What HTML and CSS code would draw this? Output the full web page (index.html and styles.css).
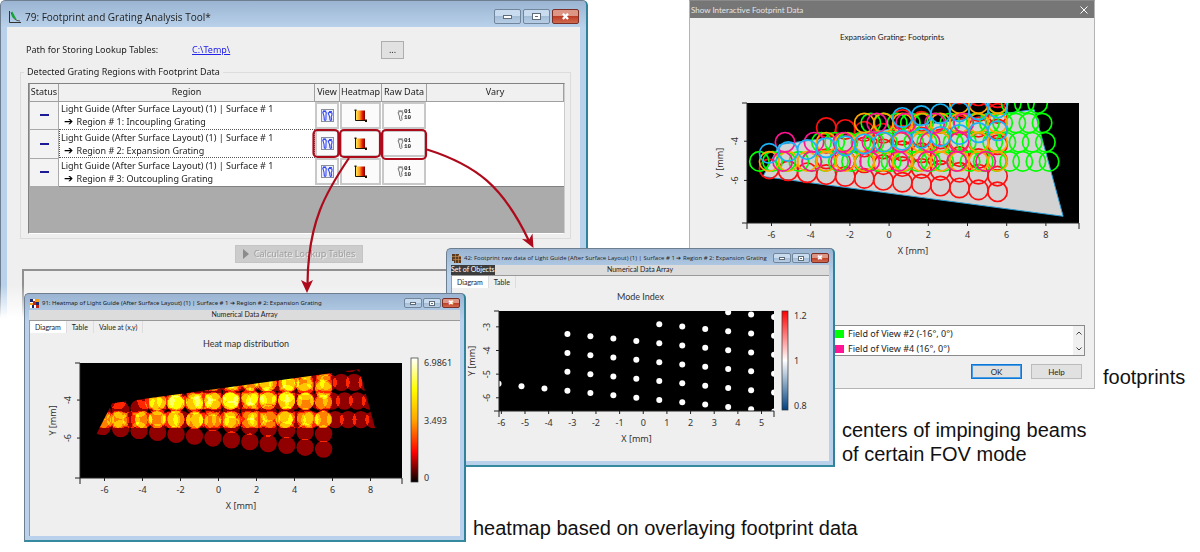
FILE: index.html
```html
<!DOCTYPE html>
<html lang="en">

<head>
    <meta charset="utf-8">
    <title>Footprint and Grating Analysis Tool</title>
    <link rel="stylesheet" href="styles.css">
</head>

<body>
    <!-- shared icons -->
    <svg class="sprite" aria-hidden="true">
        <defs>
            <symbol id="icon-view" viewBox="0 0 13 13">
                <rect x=".5" y=".5" width="12" height="12" fill="#e9edff" stroke="#8a8f9c" />
                <g fill="#fff" stroke="#3347ee" stroke-width="1.1">
                    <path d="M1.8 3.2Q3.4 1.4 5.2 3.4L5 6.5L4.9 10.8Q3.9 12.2 3.3 10.6L3 7Z" />
                    <path d="M7.2 4.2Q9 2.4 11 4.2Q11.2 6 10.2 7.8L10.6 10.8Q9.6 12 9 10.8L8.6 7.6Z" />
                </g>
                <path d="M2 2h3M8 2.6h3" stroke="#3347ee" />
            </symbol>
            <symbol id="icon-heat" viewBox="0 0 13 13">
                <rect x="2" y="1.500" width="9" height="9.500" fill="url(#heat-icon)" />
                <path d="M1.5 1v10.500H12" fill="none" stroke="#1d1300" />
                <path d="M.500 .500h2v1.500h-2zM11 10.500h2V13h-2z" fill="#1d1300" />
            </symbol>
            <symbol id="icon-raw" viewBox="0 0 7 13">
                <path d="M1 3.500Q3.500 1 6 3.500Q5.600 6 4.600 7.500L5 10.500Q3.800 13 2.800 10.500L2.300 7Z" fill="#f4f4f4" stroke="#777" />
                <path d="M1 2h5" stroke="#777" />
            </symbol>
            <linearGradient id="heat-icon">
                <stop offset="0" stop-color="#ffe85a" />
                <stop offset=".4" stop-color="#ff9a1a" />
                <stop offset=".7" stop-color="#e62000" />
                <stop offset="1" stop-color="#7a0000" />
            </linearGradient>
            <linearGradient id="bar-hot" x2="0" y2="1">
                <stop offset="0" stop-color="#fff" />
                <stop offset=".25" stop-color="#ff0" />
                <stop offset=".5" stop-color="#ffa500" />
                <stop offset=".76" stop-color="#f00" />
                <stop offset="1" stop-color="#000" />
            </linearGradient>
            <linearGradient id="bar-mode" x2="0" y2="1">
                <stop offset="0" stop-color="#f00" />
                <stop offset=".5" stop-color="#fff" />
                <stop offset="1" stop-color="#004080" />
            </linearGradient>
            <!-- number of overlapping footprints to colour -->
            <filter id="hot" x="0" y="0" width="1" height="1" color-interpolation-filters="sRGB">
                <feComponentTransfer>
                    <feFuncR type="discrete" tableValues="0 .57 1 1 1 1 1 1" />
                    <feFuncG type="discrete" tableValues="0 0 .15 .5 .78 1 1 1" />
                    <feFuncB type="discrete" tableValues="0 0 0 0 0 0 .4 .6" />
                </feComponentTransfer>
            </filter>
        </defs>
    </svg>

    <main class="desktop">
        <section class="window tool">
            <header class="titlebar">
                <svg class="app-icon" viewBox="0 0 14 14">
                    <path d="M1.500 1v11.500H13" fill="none" stroke="#333" />
                    <path d="M3 2Q5 11 12 11" fill="none" stroke="#555" />
                    <path d="M4 1l5 9-5-3z" fill="#18a53a" />
                </svg>
                <h1>79: Footprint and Grating Analysis Tool*</h1>
                <div class="controls">
                    <button type="button" aria-label="Minimize"><i class="min"></i></button>
                    <button type="button" aria-label="Maximize"><i class="max"></i></button>
                    <button type="button" class="close" aria-label="Close">✖</button>
                </div>
            </header>
            <div class="tool-body">
                <div class="path-row">
                    <span>Path for Storing Lookup Tables:</span>
                    <a href="#">C:\Temp\</a>
                    <button type="button" class="browse">...</button>
                </div>
                <fieldset>
                    <legend>Detected Grating Regions with Footprint Data</legend>
                    <div class="grid">
                        <table>
                            <colgroup>
                                <col class="c-status">
                                <col>
                                <col class="c-view">
                                <col class="c-heat">
                                <col class="c-raw">
                                <col class="c-vary">
                            </colgroup>
                            <thead>
                                <tr>
                                    <th>Status</th>
                                    <th>Region</th>
                                    <th>View</th>
                                    <th>Heatmap</th>
                                    <th>Raw Data</th>
                                    <th>Vary</th>
                                </tr>
                            </thead>
                            <tbody>
                                <tr>
                                    <td class="status"><i></i></td>
                                    <td class="region">Light Guide (After Surface Layout) (1) | Surface # 1<br><span><b>➔</b> Region # 1: Incoupling Grating</span></td>
                                    <td class="action"><button type="button" aria-label="View"><svg class="icon"><use href="#icon-view" /></svg></button></td>
                                    <td class="action"><button type="button" aria-label="Heatmap"><svg class="icon"><use href="#icon-heat" /></svg></button></td>
                                    <td class="action"><button type="button"><svg class="icon foot"><use href="#icon-raw" /></svg><span class="bits">01<br>10</span></button></td>
                                    <td></td>
                                </tr>
                                <tr class="current">
                                    <td class="status"><i></i></td>
                                    <td class="region">Light Guide (After Surface Layout) (1) | Surface # 1<br><span><b>➔</b> Region # 2: Expansion Grating</span></td>
                                    <td class="action"><button type="button" aria-label="View"><svg class="icon"><use href="#icon-view" /></svg></button></td>
                                    <td class="action"><button type="button" aria-label="Heatmap"><svg class="icon"><use href="#icon-heat" /></svg></button></td>
                                    <td class="action"><button type="button"><svg class="icon foot"><use href="#icon-raw" /></svg><span class="bits">01<br>10</span></button></td>
                                    <td></td>
                                </tr>
                                <tr>
                                    <td class="status"><i></i></td>
                                    <td class="region">Light Guide (After Surface Layout) (1) | Surface # 1<br><span><b>➔</b> Region # 3: Outcoupling Grating</span></td>
                                    <td class="action"><button type="button" aria-label="View"><svg class="icon"><use href="#icon-view" /></svg></button></td>
                                    <td class="action"><button type="button" aria-label="Heatmap"><svg class="icon"><use href="#icon-heat" /></svg></button></td>
                                    <td class="action"><button type="button"><svg class="icon foot"><use href="#icon-raw" /></svg><span class="bits">01<br>10</span></button></td>
                                    <td></td>
                                </tr>
                            </tbody>
                        </table>
                    </div>
                </fieldset>
                <button type="button" class="calculate" disabled>
                    <svg viewBox="0 0 6 10"><path d="M0 0l6 5-6 5z" fill="#8b8b8b" /></svg>Calculate Lookup Tables
                </button>
                <div class="log"></div>
            </div>
        </section>

        <section class="dialog">
            <header>
                <h2>Show Interactive Footprint Data</h2>
                <button type="button" aria-label="Close"><svg viewBox="0 0 8 8"><path d="M.5 .5l7 7M7.500 .5l-7 7" stroke="#fff" /></svg></button>
            </header>
            <h3>Expansion Grating: Footprints</h3>
            <svg class="chart" id="footprints" width="404" height="262"></svg>
            <div class="legend">
                <ul>
                    <li class="green">Field of View #2 (-16°, 0°)</li>
                    <li class="pink">Field of View #4 (16°, 0°)</li>
                </ul>
                <div class="scroll">
                    <button type="button" aria-label="Up"><svg viewBox="0 0 6 4"><path d="M.5 3.500L3 1l2.500 2.500" /></svg></button>
                    <button type="button" aria-label="Down"><svg viewBox="0 0 6 4"><path d="M.5 .5L3 3L5.500 .5" /></svg></button>
                </div>
            </div>
            <footer>
                <button type="button" class="primary">OK</button>
                <button type="button">Help</button>
            </footer>
        </section>

        <section class="window small raw">
            <header class="titlebar">
                <svg class="app-icon" viewBox="0 0 9 9">
                    <path d="M0 0h7v7H0zM2 2h7v7H2z" fill="#5b3a22" />
                    <path d="M0 2.500h9M1 5.500h8M3.500 0v9M6.500 1v8" stroke="#c08a50" stroke-width=".7" />
                </svg>
                <h2>42: Footprint raw data of Light Guide (After Surface Layout) (1) | Surface # 1 ➔ Region # 2: Expansion Grating</h2>
                <div class="controls">
                    <button type="button" aria-label="Minimize"><i class="min"></i></button>
                    <button type="button" aria-label="Maximize"><i class="max"></i></button>
                    <button type="button" class="close" aria-label="Close">✖</button>
                </div>
            </header>
            <div class="view-type"><b>Set of Objects</b><span>Numerical Data Array</span></div>
            <nav class="tabs">
                <button type="button" class="on">Diagram</button>
                <button type="button">Table</button>
            </nav>
            <svg class="chart" id="raw" width="376" height="173"></svg>
        </section>

        <section class="window small heat">
            <header class="titlebar">
                <svg class="app-icon" viewBox="0 0 9 9">
                    <path d="M0 0h9v9H0z" fill="#fff" />
                    <path d="M0 0h3v3H0zM6 3h3v3H6zM2 6h2v3H2z" fill="#1d2466" />
                    <path d="M3 2h3v4H3zM6 6h3v3H6z" fill="#c22617" />
                    <path d="M5 0h4v3H5zM0 4h3v2H0z" fill="#f0a01c" />
                </svg>
                <h2>91: Heatmap of Light Guide (After Surface Layout) (1) | Surface # 1 ➔ Region # 2: Expansion Grating</h2>
                <div class="controls">
                    <button type="button" aria-label="Minimize"><i class="min"></i></button>
                    <button type="button" aria-label="Maximize"><i class="max"></i></button>
                    <button type="button" class="close" aria-label="Close">✖</button>
                </div>
            </header>
            <div class="view-type"><span>Numerical Data Array</span></div>
            <nav class="tabs">
                <button type="button" class="on">Diagram</button>
                <button type="button">Table</button>
                <button type="button">Value at (x,y)</button>
            </nav>
            <svg class="chart" id="heat" width="430" height="203"></svg>
        </section>

        <!-- marked buttons and the windows they open -->
        <svg class="marks" width="600" height="300" aria-hidden="true">
            <g fill="none" stroke="#ad0b1c" stroke-width="2.200">
                <rect x="313.500" y="130" width="25" height="27" rx="4" />
                <rect x="340" y="130" width="40" height="27" rx="4" />
                <rect x="382" y="130" width="44" height="29" rx="4" />
                <path d="M349 158C326 192 308 222 307.500 284" />
                <path d="M427 149.500C476 165 503 186 529 241" />
            </g>
            <path d="M307 293l-6-13 6 3 6-3zM533.500 248l-11.500-9 7 .500 3.500-6z" fill="#ad0b1c" />
        </svg>

        <p class="caption for-dialog">footprints</p>
        <p class="caption for-raw">centers of impinging beams<br>of certain FOV mode</p>
        <p class="caption for-heat">heatmap based on overlaying footprint data</p>
    </main>
    <script src="charts.js"></script>
</body>

</html>
```
FILE: styles.css
```css
* {
    box-sizing: border-box;
}

body,
h1,
h2,
h3,
p,
ul {
    margin: 0;
    padding: 0;
}

body {
    background: #fff;
    color: #222;
    font: 9px/12px "Noto Sans", "Open Sans", sans-serif;
}

h1,
h2,
h3 {
    font-size: inherit;
    font-weight: normal;
    white-space: nowrap;
}

button {
    display: flex;
    align-items: center;
    justify-content: center;
    padding: 0;
    border: 1px solid #bbb;
    background: #e1e1e1;
    color: inherit;
    font: inherit;
}

.sprite {
    position: absolute;
    width: 0;
    height: 0;
}

.desktop {
    position: relative;
    min-height: 552px;
    overflow: hidden;
}

/* windows */

.window {
    position: absolute;
    border: 1px solid #6d7e90;
    border-right: 2px solid #2f8299;
    border-radius: 5px 5px 0 0;
    background: linear-gradient(#9ab4d2, #b9d1ea 26px);
}

.titlebar {
    display: flex;
    align-items: center;
    gap: 3px;
    height: 25px;
}

.app-icon {
    flex: none;
    width: 14px;
    height: 14px;
}

.controls {
    display: flex;
    gap: 2px;
    margin-left: auto;
}

.controls button {
    width: 27px;
    height: 15px;
    border-color: #71859b;
    border-radius: 2px;
    background: linear-gradient(#c9dbee 45%, #a4bdd7 50%, #b8cee6);
}

.controls .close {
    border-color: #7b2e26;
    background: linear-gradient(#dd9586 45%, #bd3c25 50%, #cf6b50);
    color: #fff;
    font-family: "DejaVu Sans", sans-serif;
}

.min,
.max {
    width: 9px;
    height: 4px;
    border: 1px solid #5e6b79;
    background: #fff;
}

.max {
    height: 7px;
}

.max::before {
    content: "";
    display: block;
    width: 3px;
    height: 1px;
    margin: 2px auto;
    background: #5e6b79;
}

.tool {
    top: 0;
    left: 0;
    width: 588px;
    height: 318px;
    padding: 1px 6px 0;
    -webkit-mask-image: linear-gradient(#000 285px, transparent 318px);
    mask-image: linear-gradient(#000 285px, transparent 318px);
}

.tool .titlebar {
    padding: 4px 1px 0 1px;
    font-family: "Open Sans", sans-serif;
    font-size: 10px;
}

.tool-body {
    height: 100%;
    padding: 14px 9px 0 13px;
    background: #efefef;
}

.path-row {
    display: flex;
    align-items: center;
    height: 18px;
    padding-left: 6px;
}

.path-row span {
    flex: 0 0 166px;
}

.path-row a {
    flex: 0 0 189px;
    color: #2222e8;
}

.browse {
    width: 23px;
    height: 18px;
    border-color: #adadad;
    line-height: 8px;
}

fieldset {
    height: 173px;
    margin: 7px 0 0;
    padding: 5px 5px 3px 7px;
    border: 1px solid #dcdcdc;
}

legend {
    margin-left: -4px;
    padding: 0 3px;
}

.grid {
    height: 151px;
    border: 1px solid #828282;
    border-right-color: #ccc;
    border-bottom-color: #fff;
    background: #ababab;
}

table {
    width: 100%;
    border-collapse: collapse;
    table-layout: fixed;
    background: #fff;
}

.c-status {
    width: 29px;
}

.c-view {
    width: 25px;
}

.c-heat {
    width: 42px;
}

.c-raw {
    width: 45px;
}

.c-vary {
    width: 137px;
}

th {
    height: 17px;
    padding: 0;
    border: 1px solid #a0a0a0;
    border-top: 0;
    background: #f0f0f0;
    font-weight: normal;
    line-height: 16px;
    white-space: nowrap;
}

td {
    height: 28px;
    padding: 0;
}

.current td {
    height: 29px;
}

tbody {
    border-bottom: 1px solid #828282;
}

.status {
    border: 1px solid #aaa;
    background: #f3f3f3;
}

.status i {
    display: block;
    width: 9px;
    height: 2px;
    margin: auto;
    background: #1b1b96;
}

.region {
    padding-left: 2px;
    line-height: 13px;
    white-space: nowrap;
}

.region span {
    padding-left: 3px;
}

.region b {
    margin-right: 1px;
    color: #000;
    font: bold 11px/12px "DejaVu Sans", sans-serif;
}

.current .region {
    outline: 1px dotted #555;
    outline-offset: -1px;
}

.action button {
    width: calc(100% - 1px);
    height: 27px;
    margin: auto;
    border: 2px solid #c8c8c8;
    background: #fbfbfb;
}

.icon {
    width: 13px;
    height: 13px;
}

.foot {
    width: 7px;
}

.bits {
    font: bold 6px/6px "Liberation Mono", monospace;
}

.calculate {
    width: 128px;
    height: 18px;
    gap: 5px;
    margin: 6px auto 0 215px;
    border-color: #c4c4c4;
    background: #ccc;
    color: #a0a0a0;
    text-shadow: 1px 1px #eee;
    white-space: nowrap;
}

.calculate svg {
    width: 6px;
    height: 10px;
}

.log {
    height: 80px;
    margin: 6px 0 0 2px;
    border: 2px solid #909090;
    border-right: 0;
}

/* result windows */

.small {
    padding: 0 4px 4px;
    border-bottom: 2px solid #348ba0;
    font-family: Lato, sans-serif;
    font-size: 7px;
    line-height: 9px;
}

.small .titlebar {
    height: 16px;
    padding: 2px 0 0 1px;
}

.small h2 {
    font-family: "Open Sans", sans-serif;
    font-size: 6px;
}

.small .app-icon {
    width: 9px;
    height: 9px;
}

.small .controls {
    gap: 1px;
}

.small .controls button {
    width: 18px;
    height: 10px;
}

.small .min {
    width: 6px;
    height: 3px;
}

.small .max {
    width: 6px;
    height: 5px;
}

.small .max::before {
    width: 2px;
    margin: 1px auto;
}

.view-type {
    display: flex;
    height: 11px;
    border-bottom: 1px solid #999;
    background: #dcdcdc;
}

.view-type b {
    width: 44px;
    margin-right: -44px;
    background: #3c3c3c;
    color: #fff;
    font-weight: normal;
    white-space: nowrap;
}

.view-type span {
    flex: 1;
    text-align: center;
}

.tabs {
    display: flex;
    height: 12px;
    border-left: 1px solid #999;
    background: #efefef;
}

.tabs button {
    padding: 0 5px;
    border: 0;
    border-right: 1px solid #ddd;
    background: none;
}

.tabs .on {
    background: #fff;
}

.chart {
    display: block;
    background: #efefef;
    font-family: "Noto Sans", sans-serif;
    font-size: 9px;
}

.small .chart {
    width: 100%;
    border-left: 1px solid #999;
}

.raw {
    top: 248px;
    left: 446px;
    width: 389px;
}

.heat {
    top: 293px;
    left: 24px;
    width: 442px;
}

.heat h2 {
    font-family: "Noto Sans", sans-serif;
}

/* chart parts */

.chart text {
    fill: #333;
}

.chart .title {
    font-family: Lato, sans-serif;
}

.mid {
    text-anchor: middle;
}

.axis {
    fill: none;
    stroke: #222;
}

.ring {
    fill: none;
    stroke-width: 1.7px;
}

.count {
    fill: #252525;
    mix-blend-mode: plus-lighter;
}

.overlay {
    isolation: isolate;
}

/* footprint dialog */

.dialog {
    position: absolute;
    top: 0;
    left: 689px;
    width: 406px;
    height: 389px;
    border: 1px solid #b4b4b4;
    border-top-color: #8a8a8a;
    background: #efefef;
    font-family: Lato, sans-serif;
    font-size: 8px;
}

.dialog header {
    display: flex;
    align-items: center;
    justify-content: space-between;
    height: 17px;
    padding: 0 6px 0 1px;
    background: #767676;
    color: #e4e4e4;
}

.dialog header button {
    border: 0;
    background: none;
}

.dialog header svg {
    width: 8px;
    height: 8px;
}

.dialog h3 {
    margin-top: 13px;
    text-align: center;
}

.legend {
    display: flex;
    width: 265px;
    height: 31px;
    margin: 20px 9px 0 auto;
    border: 1px solid #8a8a8a;
    background: #fff;
    font-family: "Noto Sans", sans-serif;
    font-size: 9px;
}

.legend ul {
    flex: 1;
    list-style: none;
}

.legend li {
    display: flex;
    align-items: center;
    gap: 4px;
    height: 15px;
    line-height: 14px;
}

.legend li::before {
    content: "";
    width: 23px;
    height: 8px;
    background: #00ff00;
}

.legend .pink::before {
    background: #ff1493;
}

.scroll {
    display: flex;
    flex-direction: column;
    justify-content: space-between;
    width: 11px;
    background: #f0f0f0;
}

.scroll button {
    height: 13px;
    border: 0;
    background: none;
}

.scroll svg {
    width: 6px;
    height: 4px;
    fill: none;
    stroke: #444;
}

.dialog footer {
    display: flex;
    justify-content: flex-end;
    gap: 9px;
    margin: 8px 12px 0 0;
}

.dialog footer button {
    width: 51px;
    height: 15px;
}

.dialog footer .primary {
    border: 1px solid #0a78d7;
    outline: 1px solid #4a9be4;
    outline-offset: -2px;
}

/* annotations */

.marks {
    position: absolute;
    top: 0;
    left: 0;
}

.caption {
    position: absolute;
    color: #111;
    font: 20px/24px "Liberation Sans", Arial, sans-serif;
    white-space: nowrap;
}

.for-dialog {
    top: 365px;
    left: 1103px;
}

.for-raw {
    top: 418px;
    left: 842px;
}

.for-heat {
    top: 516px;
    left: 473px;
}
```
FILE: charts.js
```js
var NS = 'http://www.w3.org/2000/svg';

function add(parent, tag, attrs, text) {
    var el = document.createElementNS(NS, tag);
    for (var k in attrs) el.setAttribute(k, attrs[k]);
    if (text !== undefined) el.textContent = text;
    parent.appendChild(el);
    return el;
}

function line(from, to, step) {
    var out = [];
    for (var v = from; v <= to + 0.01; v += step) out.push(v);
    return out;
}

// footprint centers in mm, one list for each field of view
var region = [[-6.43, -5.8], [8.88, -7.83], [7.4, -2.38], [-5.6, -4.17]];
var rows = [-5.03, -4.05, -3.07, -2.08];
var red = [], green = [], orange = [], pink = [], blue = [];

[1, 1, 1, 4, 4, 4, 4, 5, 5, 5, 7, 7, 7].forEach(function (n, i) {
    var x = -6.12 + 0.971 * i;
    for (var k = 0; k < n; k++) red.push([x, -5.41 - 0.0975 * i + 0.8 * k]);
    blue.push([x, -4.62 + 0.096 * i]);
    if (i > 6) blue.push([x, -3.46 + 0.096 * i]);
    [0, 3, 5, 10].forEach(function (first, r) {
        if (i >= first) orange.push([x, rows[r]]);
    });
});
[[-6.62, 8.17], [-3.45, 7.98], [-0.93, 7.81], [5.56, 7.58]].forEach(function (r, i) {
    line(r[0], r[1], 0.672).forEach(function (x) { green.push([x, rows[i]]); });
});
[[-5.43, 5], [-5.31, 5], [-0.63, 4.2]].forEach(function (r, i) {
    line(r[0], r[1], 1.48).forEach(function (x) { pink.push([x, rows[i]]); });
});

function chart(id, o) {
    var svg = document.getElementById(id);
    var right = o.left + o.w, bottom = o.top + o.h;
    var c = {
        svg: svg,
        x: function (v) { return o.left + (v - o.xmin) * o.scale; },
        y: function (v) { return o.top + (o.ymax - v) * o.scale; }
    };
    var clip = add(svg, 'clipPath', { id: id + '-plot' });
    add(clip, 'rect', { x: o.left, y: o.top, width: o.w, height: o.h });
    add(svg, 'rect', { x: o.left, y: o.top, width: o.w, height: o.h });
    c.plot = add(svg, 'g', { 'clip-path': 'url(#' + id + '-plot)' });

    var d = 'M' + (o.left - 5) + ' ' + o.top + 'h5V' + bottom + 'h-5M' + o.left + ' ' + (bottom + 6) + 'v-6H' + right + 'v6';
    o.xticks.forEach(function (v) {
        d += 'M' + c.x(v) + ' ' + bottom + 'v3';
        add(svg, 'text', { x: c.x(v), y: bottom + 15, 'class': 'mid' }, v);
    });
    o.yticks.forEach(function (v) {
        var y = c.y(v), tx = o.left - 9;
        d += 'M' + o.left + ' ' + y + 'h-3';
        add(svg, 'text', { x: tx, y: y, 'class': 'mid', transform: 'rotate(-90 ' + tx + ' ' + y + ')' }, v);
    });
    add(svg, 'path', { d: d, 'class': 'axis' });
    add(svg, 'text', { x: o.left + o.w / 2, y: bottom + 31, 'class': 'mid' }, 'X [mm]');
    var lx = o.left - 24, ly = o.top + o.h / 2;
    add(svg, 'text', { x: lx, y: ly, 'class': 'mid', transform: 'rotate(-90 ' + lx + ' ' + ly + ')' }, 'Y [mm]');
    if (o.title) add(svg, 'text', { x: o.left + o.w / 2 + o.shift, y: o.top - o.rise, 'class': 'mid title' }, o.title);
    return c;
}

function polygon(c, parent, attrs) {
    attrs.points = region.map(function (p) { return c.x(p[0]) + ',' + c.y(p[1]); }).join(' ');
    return add(parent, 'polygon', attrs);
}

function circles(c, parent, list, r, attrs) {
    list.forEach(function (p) {
        attrs.cx = c.x(p[0]);
        attrs.cy = c.y(p[1]);
        attrs.r = r;
        add(parent, 'circle', attrs);
    });
}

function colorbar(c, x, y, w, h, fill, labels) {
    add(c.svg, 'rect', { x: x, y: y, width: w, height: h, fill: 'url(#' + fill + ')', stroke: '#333', 'stroke-width': 0.7 });
    labels.forEach(function (l) { add(c.svg, 'text', { x: x + w + 6, y: l[1] }, l[0]); });
}

var f = chart('footprints', {
    left: 57, top: 60, w: 332, h: 120, xmin: -7.25, ymax: -2.05, scale: 19.6,
    xticks: line(-6, 8, 2), yticks: [-4, -6]
});
polygon(f, f.plot, { fill: '#d3d3d3', stroke: '#29a0d8' });
circles(f, f.plot, red, 9.7, { 'class': 'ring', stroke: '#ff1010' });
circles(f, f.plot, green, 9.7, { 'class': 'ring', stroke: '#00ff00' });
circles(f, f.plot, orange, 9.7, { 'class': 'ring', stroke: '#ffa500' });
circles(f, f.plot, pink, 9.7, { 'class': 'ring', stroke: '#ff1493' });
circles(f, f.plot, blue, 9.7, { 'class': 'ring', stroke: '#1ab2f5' });

var m = chart('raw', {
    left: 47, top: 23, w: 275, h: 100, xmin: -6.1, ymax: -2.33, scale: 23.65,
    xticks: line(-6, 5, 1), yticks: [-3, -4, -5, -6], title: 'Mode Index', shift: 4, rise: 11
});
circles(m, m.plot, red, 3, { fill: '#fff' });
colorbar(m, 330, 23, 6, 99, 'bar-mode', [['1.2', 31], ['1', 76], ['0.8', 121]]);

var h = chart('heat', {
    left: 50, top: 30, w: 322, h: 115, xmin: -7.29, ymax: -2.05, scale: 19,
    xticks: line(-6, 8, 2), yticks: [-4, -6], title: 'Heat map distribution', shift: 5, rise: 16
});
var area = add(h.svg, 'clipPath', { id: 'region' });
polygon(h, area, {});
var hot = add(h.plot, 'g', { filter: 'url(#hot)' });
var counts = add(hot, 'g', { 'clip-path': 'url(#region)', 'class': 'overlay' });
[red, green, orange, pink, blue].forEach(function (list) {
    circles(h, counts, list, 8.7, { 'class': 'count' });
});
colorbar(h, 381, 25, 7, 124, 'bar-hot', [['6.9861', 33], ['3.493', 91], ['0', 148]]);
```
